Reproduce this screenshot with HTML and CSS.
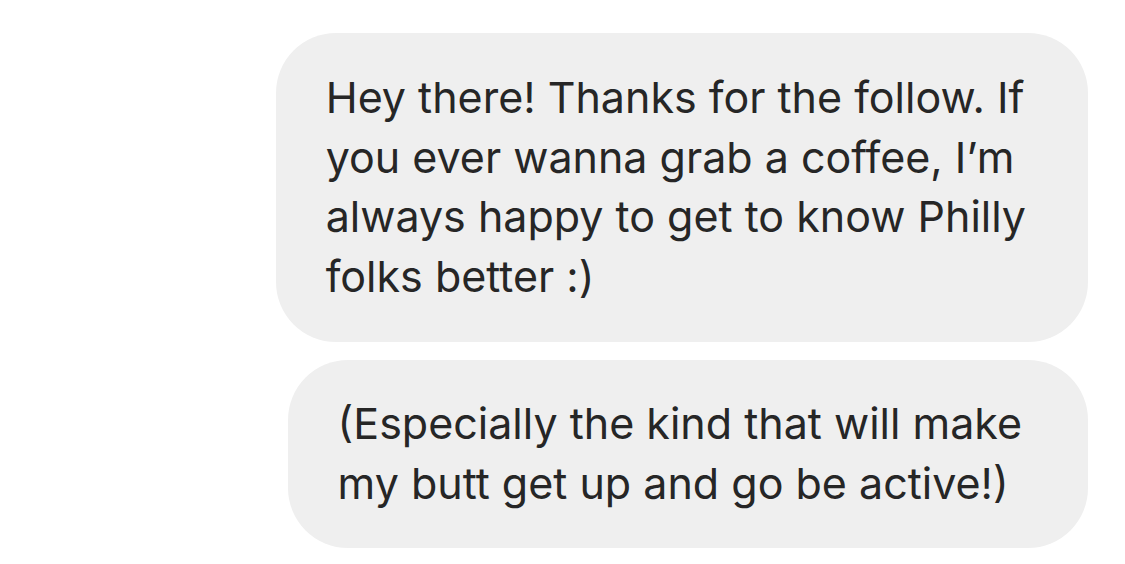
FILE: index.html
```html
<!DOCTYPE html>
<html>
<head>
<meta charset="utf-8">
<link rel="stylesheet" href="styles.css">
</head>
<body>
<div class="thread">
  <div class="bubble b1">Hey there! Thanks for the follow. If<br>you ever wanna grab a coffee, I’m<br>always happy to get to know Philly<br>folks better :)</div>
  <div class="bubble b2">(Especially the kind that will make<br>my butt get up and go be active!)</div>
</div>
</body>
</html>
```
FILE: styles.css
```css
html, body {
  margin: 0;
  background: #ffffff;
}
.thread {
  display: flex;
  flex-direction: column;
  align-items: flex-end;
  gap: 18px;
  padding: 33px 37px 0 0;
}
.bubble {
  background: #efefef;
  color: #262626;
  font-family: Inter, "Noto Sans", sans-serif;
  font-size: 43px;
  line-height: 59.5px;
  border-radius: 60px;
  white-space: nowrap;
}
.b1 {
  padding: 35px 62px 36px 50px;
}
.b2 {
  padding: 34px 66px 35px 50px;
}
```
